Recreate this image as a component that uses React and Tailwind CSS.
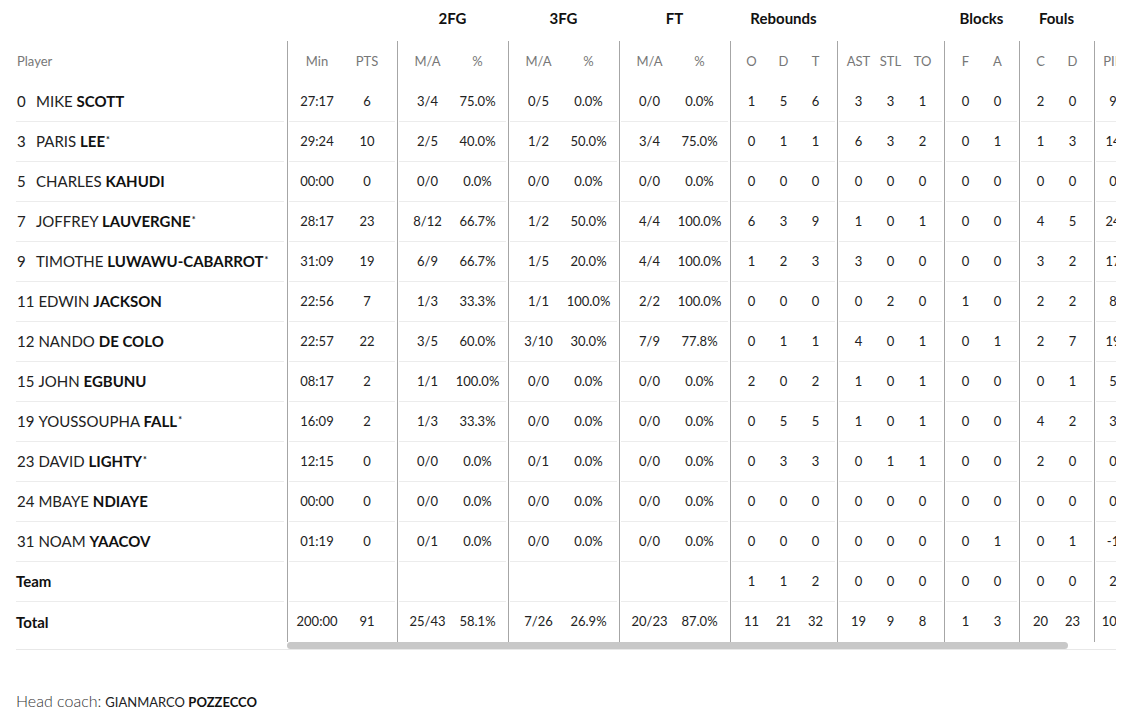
import React from 'react'

const players = [
  ['0', 'MIKE', 'SCOTT', false, ['27:17', '6', '3/4', '75.0%', '0/5', '0.0%', '0/0', '0.0%', '1', '5', '6', '3', '3', '1', '0', '0', '2', '0', '9']],
  ['3', 'PARIS', 'LEE', true, ['29:24', '10', '2/5', '40.0%', '1/2', '50.0%', '3/4', '75.0%', '0', '1', '1', '6', '3', '2', '0', '1', '1', '3', '14']],
  ['5', 'CHARLES', 'KAHUDI', false, ['00:00', '0', '0/0', '0.0%', '0/0', '0.0%', '0/0', '0.0%', '0', '0', '0', '0', '0', '0', '0', '0', '0', '0', '0']],
  ['7', 'JOFFREY', 'LAUVERGNE', true, ['28:17', '23', '8/12', '66.7%', '1/2', '50.0%', '4/4', '100.0%', '6', '3', '9', '1', '0', '1', '0', '0', '4', '5', '24']],
  ['9', 'TIMOTHE', 'LUWAWU-CABARROT', true, ['31:09', '19', '6/9', '66.7%', '1/5', '20.0%', '4/4', '100.0%', '1', '2', '3', '3', '0', '0', '0', '0', '3', '2', '17']],
  ['11', 'EDWIN', 'JACKSON', false, ['22:56', '7', '1/3', '33.3%', '1/1', '100.0%', '2/2', '100.0%', '0', '0', '0', '0', '2', '0', '1', '0', '2', '2', '8']],
  ['12', 'NANDO', 'DE COLO', false, ['22:57', '22', '3/5', '60.0%', '3/10', '30.0%', '7/9', '77.8%', '0', '1', '1', '4', '0', '1', '0', '1', '2', '7', '19']],
  ['15', 'JOHN', 'EGBUNU', false, ['08:17', '2', '1/1', '100.0%', '0/0', '0.0%', '0/0', '0.0%', '2', '0', '2', '1', '0', '1', '0', '0', '0', '1', '5']],
  ['19', 'YOUSSOUPHA', 'FALL', true, ['16:09', '2', '1/3', '33.3%', '0/0', '0.0%', '0/0', '0.0%', '0', '5', '5', '1', '0', '1', '0', '0', '4', '2', '3']],
  ['23', 'DAVID', 'LIGHTY', true, ['12:15', '0', '0/0', '0.0%', '0/1', '0.0%', '0/0', '0.0%', '0', '3', '3', '0', '1', '1', '0', '0', '2', '0', '0']],
  ['24', 'MBAYE', 'NDIAYE', false, ['00:00', '0', '0/0', '0.0%', '0/0', '0.0%', '0/0', '0.0%', '0', '0', '0', '0', '0', '0', '0', '0', '0', '0', '0']],
  ['31', 'NOAM', 'YAACOV', false, ['01:19', '0', '0/1', '0.0%', '0/0', '0.0%', '0/0', '0.0%', '0', '0', '0', '0', '0', '0', '0', '1', '0', '1', '-1']],
]

const team = ['', '', '', '', '', '', '', '', '1', '1', '2', '0', '0', '0', '0', '0', '0', '0', '2']
const total = ['200:00', '91', '25/43', '58.1%', '7/26', '26.9%', '20/23', '87.0%', '11', '21', '32', '19', '9', '8', '1', '3', '20', '23', '102']

// column groups, each one has its own divider on the left
const groups = [
  { title: '', w: 'w-[110px]', align: 'justify-center', cell: 'w-[50px]', cols: ['Min', 'PTS'] },
  { title: '2FG', w: 'w-[111px]', align: 'justify-center', cell: 'w-[50px]', cols: ['M/A', '%'] },
  { title: '3FG', w: 'w-[111px]', align: 'justify-center', cell: 'w-[50px]', cols: ['M/A', '%'] },
  { title: 'FT', w: 'w-[111px]', align: 'justify-center', cell: 'w-[50px]', cols: ['M/A', '%'] },
  { title: 'Rebounds', w: 'w-[107px]', align: 'justify-center', cell: 'w-[32px]', cols: ['O', 'D', 'T'] },
  { title: '', w: 'w-[107px]', align: 'justify-center', cell: 'w-[32px]', cols: ['AST', 'STL', 'TO'] },
  { title: 'Blocks', w: 'w-[75px]', align: 'justify-center', cell: 'w-[32px]', cols: ['F', 'A'] },
  { title: 'Fouls', w: 'w-[75px]', align: 'justify-center', cell: 'w-[32px]', cols: ['C', 'D'] },
  { title: '', w: 'w-[75px]', align: 'justify-start pl-[4px]', cell: 'w-[26px]', cols: ['PIR'] },
]

const StatRow = ({ values, last }) => {
  let i = 0
  return (
    <div className="flex">
      {groups.map((g, gi) => (
        <div key={gi} className={`${g.w} shrink-0 border-l border-[#a6a6a6] pl-px pr-[2px]`}>
          <div className={`flex items-center h-10 text-[13px] text-[#222] ${g.align} ${last ? '' : 'border-b border-[#ececec]'}`}>
            {g.cols.map((c) => {
              const v = values[i++]
              return (
                <div key={c} className={`${g.cell} shrink-0 text-center whitespace-nowrap`}>{v}</div>
              )
            })}
          </div>
        </div>
      ))}
    </div>
  )
}

const PlayerCell = ({ children, last }) => (
  <div className={`flex items-center h-10 mr-[3px] text-[15px] ${last ? '' : 'border-b border-[#ececec]'}`}>
    {children}
  </div>
)

export default function App() {
  return (
    <div className="bg-white px-4 pb-4 font-['Lato',sans-serif] text-[#222]">
      <div className="flex border-b border-[#e8e8e8]">
        {/* fixed player column */}
        <div className="w-[271px] shrink-0">
          <div className="h-[41px]" />
          <div className="h-[41px] flex items-center text-[13px] text-[#777] pl-px">Player</div>
          {players.map(([num, first, last, star]) => (
            <PlayerCell key={num}>
              <span className="min-w-[16px] mr-1 pl-px">{num}</span>
              <span className="whitespace-nowrap">
                {first} <span className="font-bold text-[#111]">{last}</span>
                {star && <sup className="text-[9px] font-bold ml-px">*</sup>}
              </span>
            </PlayerCell>
          ))}
          <PlayerCell>
            <span className="font-bold text-[#111]">Team</span>
          </PlayerCell>
          <PlayerCell last>
            <span className="font-bold text-[#111]">Total</span>
          </PlayerCell>
        </div>

        <div className="flex-1 min-w-0">
          <div className="overflow-hidden">
            <div className="w-[882px]">
              <div className="flex h-[41px]">
                {groups.map((g, gi) => (
                  <div key={gi} className={`${g.w} shrink-0 pb-[5px] flex items-center justify-center text-[15px] font-bold text-[#111]`}>
                    {g.title}
                  </div>
                ))}
              </div>
              <div className="flex">
                {groups.map((g, gi) => (
                  <div key={gi} className={`${g.w} shrink-0 border-l border-[#a6a6a6] pl-px pr-[2px]`}>
                    <div className={`flex items-center h-[41px] text-[13px] text-[#777] ${g.align}`}>
                      {g.cols.map((c) => (
                        <div key={c} className={`${g.cell} shrink-0 text-center`}>{c}</div>
                      ))}
                    </div>
                  </div>
                ))}
              </div>
              {players.map((p) => (
                <StatRow key={p[0]} values={p[4]} />
              ))}
              <StatRow values={team} />
              <StatRow values={total} last />
            </div>
          </div>
          <div className="h-[7px] w-[781px] rounded-full bg-[#c8c8c8]" />
        </div>
      </div>

      <div className="mt-[39px] flex items-baseline gap-1">
        <span className="text-[16px] font-light text-[#333]">Head coach:</span>
        <span className="text-[13px] text-[#222]">
          GIANMARCO <span className="font-bold text-[#111]">POZZECCO</span>
        </span>
      </div>
    </div>
  )
}
